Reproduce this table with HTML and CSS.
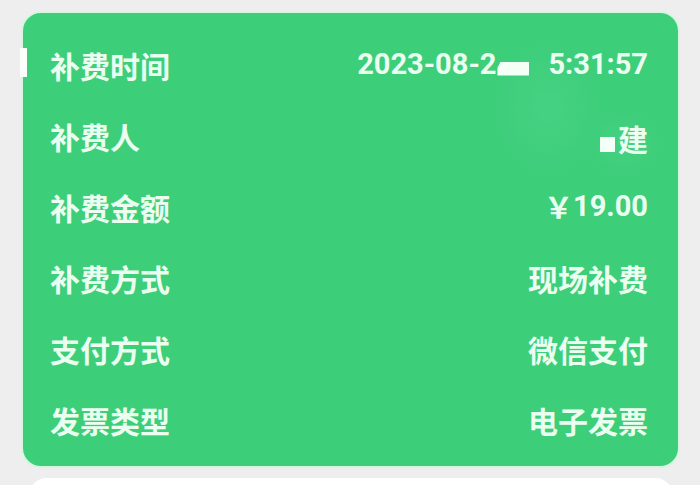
FILE: index.html
```html
<!DOCTYPE html>
<html lang="zh-CN">
<head>
<meta charset="utf-8">
<link rel="stylesheet" href="styles.css">
</head>
<body>
<div class="page">
  <div class="card">
    <span class="edge-mark"></span>
    <span class="glow glow-a"></span>
    <span class="glow glow-b"></span>
    <div class="row">
      <span class="label">补费时间</span>
      <span class="value num">2023-08-2<span class="mask"><span class="mask-patch"></span></span>5:31:57</span>
    </div>
    <div class="row">
      <span class="label">补费人</span>
      <span class="value"><span class="square"></span><span class="name">建</span></span>
    </div>
    <div class="row">
      <span class="label">补费金额</span>
      <span class="value num"><span class="yen">￥</span>19.00</span>
    </div>
    <div class="row">
      <span class="label">补费方式</span>
      <span class="value">现场补费</span>
    </div>
    <div class="row">
      <span class="label">支付方式</span>
      <span class="value">微信支付</span>
    </div>
    <div class="row">
      <span class="label">发票类型</span>
      <span class="value">电子发票</span>
    </div>
  </div>
  <div class="next-card"></div>
</div>
</body>
</html>
```

FILE: styles.css
```css
html, body {
  margin: 0;
  padding: 0;
  background: #eeeeee;
}

.page {
  width: 700px;
  height: 485px;
  overflow: hidden;
  padding-top: 11px;
  box-sizing: border-box;
}

.card {
  position: relative;
  margin-left: 21px;
  width: 659px;
  height: 457px;
  box-sizing: border-box;
  border: 2px solid #d6f6e2;
  border-radius: 20px;
  background: #3dce7a;
  padding: 16px 30px 11px 27px;
  font-family: "Noto Sans CJK SC", sans-serif;
  font-size: 30px;
  font-weight: 700;
  color: #ebfff1;
}

.edge-mark {
  position: absolute;
  left: -3px;
  top: 35px;
  width: 7px;
  height: 29px;
  background: #fafffb;
}

.glow {
  position: absolute;
  border-radius: 50%;
  pointer-events: none;
}

.glow-a {
  left: 470px;
  top: 25px;
  width: 110px;
  height: 140px;
  background: radial-gradient(closest-side, rgba(85, 216, 144, 0.35), rgba(61, 206, 122, 0));
}

.glow-b {
  left: 560px;
  top: 95px;
  width: 80px;
  height: 70px;
  background: radial-gradient(closest-side, rgba(85, 216, 144, 0.3), rgba(61, 206, 122, 0));
}

.row {
  position: relative;
  display: flex;
  justify-content: space-between;
  align-items: center;
  height: 71px;
  line-height: 1;
}

.value {
  display: flex;
  align-items: center;
}

.num {
  font-family: Roboto, "Noto Sans CJK SC", sans-serif;
  font-weight: 700;
  font-size: 29px;
}

.mask {
  position: relative;
  display: inline-block;
  width: 52px;
  height: 30px;
}

.mask-patch {
  position: absolute;
  left: 1px;
  top: 12px;
  width: 32px;
  height: 14px;
  background: #f4fff7;
  clip-path: polygon(10% 0, 100% 0, 100% 100%, 0 100%, 0 45%);
}

.square {
  position: relative;
  top: 9px;
  display: inline-block;
  width: 15px;
  height: 15px;
  background: #f4fff7;
  margin-right: 3px;
}

.name {
  position: relative;
  top: 2px;
}

.yen {
  font-family: "Noto Sans CJK SC", sans-serif;
  font-size: 29px;
}

.next-card {
  margin: 10px 28px 0 30px;
  height: 40px;
  background: #ffffff;
  border-radius: 16px 16px 0 0;
}
```
